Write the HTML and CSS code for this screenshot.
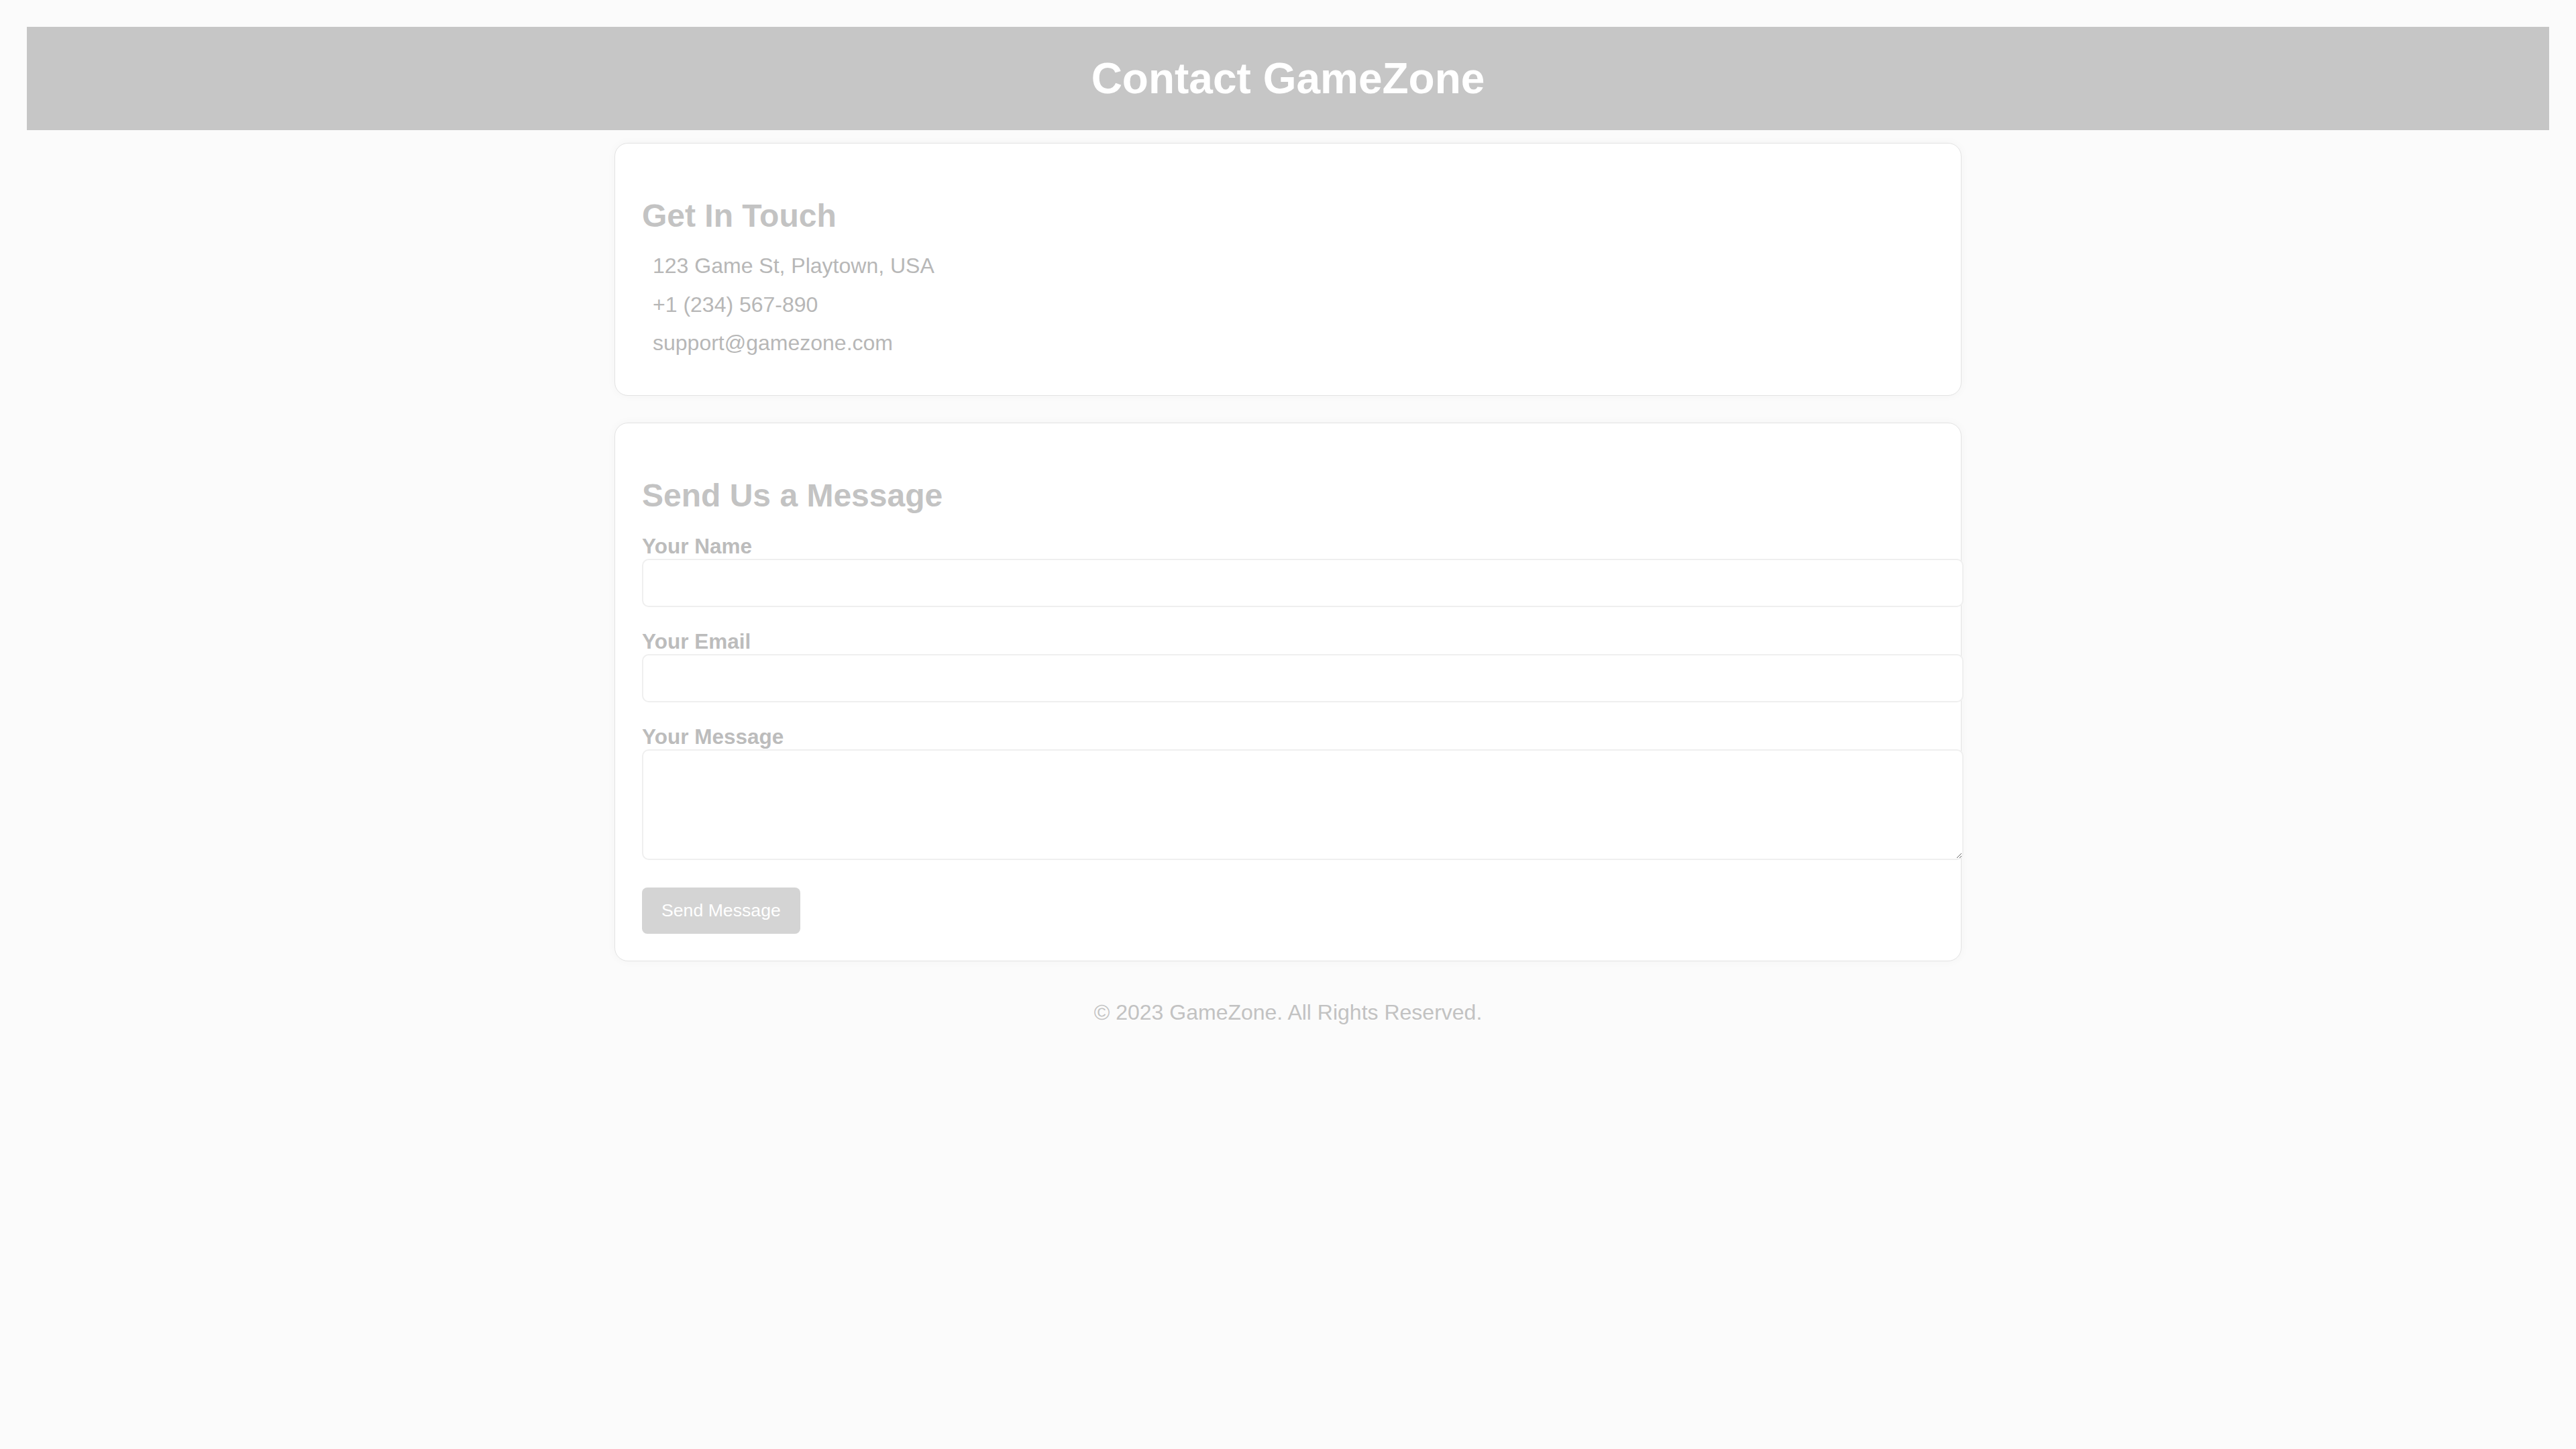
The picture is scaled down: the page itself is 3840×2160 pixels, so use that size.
FILE: index.html
```html
<!DOCTYPE html>
<html lang="en">
<head>
<meta charset="utf-8">
<title>Contact GameZone</title>
<link rel="stylesheet" href="styles.css">
</head>
<body>
<header class="site-header">
  <h1 class="site-title">Contact GameZone</h1>
</header>
<main class="container">
  <section class="card">
    <h2 class="card-title">Get In Touch</h2>
    <ul class="contact-list">
      <li>123 Game St, Playtown, USA</li>
      <li>+1 (234) 567-890</li>
      <li>support@gamezone.com</li>
    </ul>
  </section>
  <section class="card">
    <h2 class="card-title">Send Us a Message</h2>
    <form class="contact-form">
      <div class="form-group">
        <label class="form-label" for="name">Your Name</label>
        <input class="form-input" type="text" id="name">
      </div>
      <div class="form-group">
        <label class="form-label" for="email">Your Email</label>
        <input class="form-input" type="email" id="email">
      </div>
      <div class="form-group">
        <label class="form-label" for="message">Your Message</label>
        <textarea class="form-input form-textarea" id="message"></textarea>
      </div>
      <button class="send-button" type="button">Send Message</button>
    </form>
  </section>
</main>
<footer class="site-footer">
  <p class="footer-text">© 2023 GameZone. All Rights Reserved.</p>
</footer>
</body>
</html>
```

FILE: styles.css
```css
html, body {
  background: #fbfbfb;
}

body {
  margin: 40px;
  font-family: "Liberation Sans", Arial, sans-serif;
  color: #b5b5b5;
}

.site-header {
  background: #c6c6c6;
  padding: 40px;
  text-align: center;
}

.site-title {
  margin: 0;
  font-size: 64px;
  line-height: 74px;
  font-weight: bold;
  color: #ffffff;
}

.container {
  width: 2008px;
  margin: 19px auto 0;
}

.card {
  background: #ffffff;
  border: 1px solid #e3e3e3;
  border-radius: 20px;
  padding: 40px;
  margin-bottom: 40px;
  box-shadow: 0 0 14px rgba(0, 0, 0, 0.035);
}

.card-title {
  margin: 40px 0 19px;
  font-size: 48px;
  line-height: 55px;
  font-weight: bold;
  color: #c3c3c3;
}

.contact-list {
  list-style: none;
  margin: 0 0 8px;
  padding: 0 0 0 16px;
}

.contact-list li {
  font-size: 32px;
  line-height: 57.6px;
  color: #b7b7b7;
}

.contact-form {
  padding-top: 10px;
}

.form-group {
  margin-bottom: 31.5px;
}

.form-label {
  display: block;
  font-size: 31.5px;
  line-height: 38.5px;
  font-weight: bold;
  color: #bcbcbc;
}

.form-input {
  display: block;
  box-sizing: content-box;
  width: 100%;
  height: 68px;
  padding: 0 20px;
  margin: 0;
  border: 2px solid #efefef;
  border-radius: 10px;
  background: #ffffff;
  font-family: "Liberation Sans", Arial, sans-serif;
  font-size: 32px;
  color: #999;
}

.form-textarea {
  height: 161px;
  resize: vertical;
}

.send-button {
  display: block;
  margin-top: 41px;
  padding: 19px 29px;
  border: none;
  border-radius: 8px;
  background: #d4d4d4;
  color: #ffffff;
  font-family: "Liberation Sans", Arial, sans-serif;
  font-size: 26.67px;
  line-height: 30.67px;
}

.site-footer {
  text-align: center;
  padding-top: 18px;
}

.footer-text {
  margin: 0;
  font-size: 32px;
  color: #c2c2c2;
}
```
